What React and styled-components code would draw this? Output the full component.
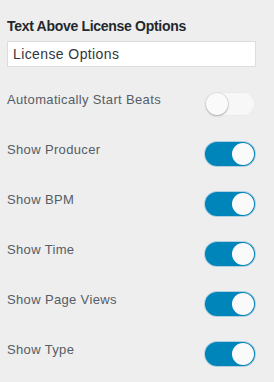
import React from 'react';
import styled, { createGlobalStyle } from 'styled-components';

const GlobalStyle = createGlobalStyle`
  body {
    margin: 0;
    background: #eeeeee;
    font-family: "Liberation Sans", Arial, sans-serif;
  }
`;

const Panel = styled.div`
  width: 274px;
  height: 382px;
  box-sizing: border-box;
  padding: 17px 19px 0 7px;
  background: #eeeeee;
  display: flex;
  flex-direction: column;
`;

const Heading = styled.h3`
  margin: 0;
  font-size: 14px;
  line-height: 18px;
  font-weight: 700;
  letter-spacing: -0.3px;
  color: #23282d;
`;

const TextInput = styled.input`
  margin-top: 6px;
  height: 26px;
  box-sizing: border-box;
  width: 249px;
  border: 1px solid #dddddd;
  background: #ffffff;
  padding: 0 5px;
  font-family: inherit;
  font-size: 14px;
  letter-spacing: 0.4px;
  color: #32373c;
  outline: none;
`;

const List = styled.div`
  margin-top: 12px;
  display: flex;
  flex-direction: column;
`;

const Row = styled.div`
  height: 50px;
  display: flex;
  align-items: center;
  justify-content: space-between;
`;

const Label = styled.span`
  font-size: 13px;
  line-height: 16px;
  letter-spacing: 0.35px;
  color: #555d66;
  padding-bottom: 8px;
`;

const Track = styled.span`
  position: relative;
  width: 50px;
  height: 24px;
  box-sizing: border-box;
  border-radius: 12px;
  background: ${p => (p.$on ? '#0085ba' : '#f7f7f7')};
  box-shadow: ${p => (p.$on ? '0 0 0 1px rgba(0,115,170,0.25)' : 'inset 0 0 0 1px #ebebeb')};
`;

const Knob = styled.span`
  position: absolute;
  top: 1px;
  left: ${p => (p.$on ? '27px' : '1px')};
  width: 22px;
  height: 22px;
  border-radius: 50%;
  background: #fafafa;
  box-shadow: ${p => (p.$on ? 'none' : '0 1px 2px rgba(0,0,0,0.25), 0 0 0 1px #e2e2e2')};
`;

const Toggle = ({ on }) => (
  <Track $on={on}>
    <Knob $on={on} />
  </Track>
);

const options = [
  { label: 'Automatically Start Beats', on: false },
  { label: 'Show Producer', on: true },
  { label: 'Show BPM', on: true },
  { label: 'Show Time', on: true },
  { label: 'Show Page Views', on: true },
  { label: 'Show Type', on: true },
];

export default function App() {
  return (
    <>
      <GlobalStyle />
      <Panel>
        <Heading>Text Above License Options</Heading>
        <TextInput defaultValue="License Options" />
        <List>
          {options.map(o => (
            <Row key={o.label}>
              <Label>{o.label}</Label>
              <Toggle on={o.on} />
            </Row>
          ))}
        </List>
      </Panel>
    </>
  );
}
